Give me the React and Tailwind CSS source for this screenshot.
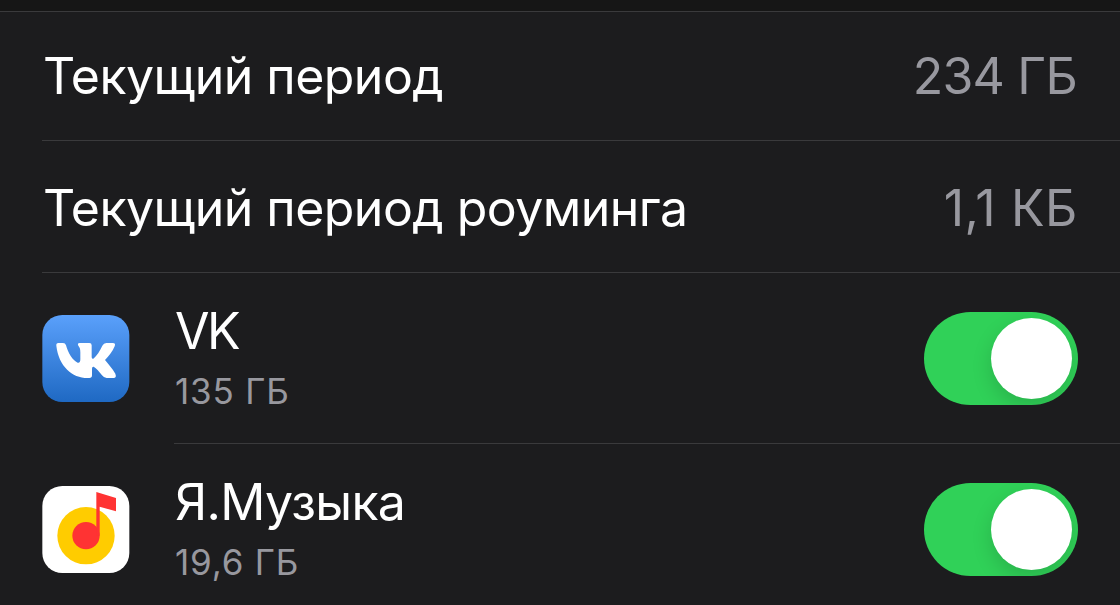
import React from 'react';

const VkIcon = () => (
  <svg className="h-[87px] w-[88px] shrink-0" viewBox="0 0 264 261">
    <defs>
      <linearGradient id="vk-bg" x1="0" y1="0" x2="0" y2="1">
        <stop offset="0" stopColor="#5aa0fb" />
        <stop offset="1" stopColor="#1f69c3" />
      </linearGradient>
    </defs>
    <rect x="1" width="261" height="261" rx="60" fill="url(#vk-bg)" />
    <path
      fill="#fff"
      transform="translate(1)"
      d="M48 84H62Q69 84 71 91C77 113 91 137 106 143Q114 145 114 133V112C114 101 112 97 108 92Q104 84 112 84H141Q148 84 148 91V126Q148 133 153 131C163 123 173 107 180 92Q184 84 192 84H211Q221 84 217 94C210 111 199 123 188 135C197 147 211 161 219 176Q224 189 213 189H193Q185 189 179 181C171 170 162 159 154 155Q149 154 149 161V181Q149 189 141 189H136C89 189 49 153 42 92Q41 84 48 84Z"
    />
  </svg>
);

const MusicIcon = () => (
  <svg className="h-[87px] w-[88px] shrink-0" viewBox="0 0 264 261">
    <rect x="1" width="261" height="261" rx="60" fill="#fff" />
    <circle cx="132" cy="149" r="86" fill="#fc0" />
    <circle cx="132" cy="149" r="41" fill="#f33" />
    <path fill="#f33" d="M163 18L222 36V76L173 62V149H163Z" />
  </svg>
);

const Toggle = () => (
  <button
    type="button"
    role="switch"
    aria-checked="true"
    className="flex h-[93px] w-[153.5px] items-center justify-end overflow-hidden rounded-full bg-[#30d158] pr-[6px]"
  >
    <span className="size-[81px] rounded-full bg-white shadow-[0_8px_20px_rgba(0,0,0,0.15)]" />
  </button>
);

const PeriodRow = ({ title, value, className, valueClassName }) => (
  <div
    className={`ml-[42px] flex items-center justify-between border-b border-[#3a3a3c] pl-[1px] text-[50px] leading-[60px] ${className}`}
  >
    <span className="tracking-[-0.55px] text-white">{title}</span>
    <span className={`text-[#98989f] ${valueClassName}`}>{value}</span>
  </div>
);

const AppRow = ({ icon, name, nameClassName, usage }) => (
  <div className="ml-[42px] flex h-[171px] items-center">
    {icon}
    <div className="ml-[44px] flex h-full flex-1 items-center justify-between border-b border-[#3a3a3c] pr-[42.5px] pl-[1px]">
      <div className="pb-[3px]">
        <p className={`text-[50px] leading-[60px] text-white ${nameClassName}`}>{name}</p>
        <p className="mt-[9px] text-[35px] leading-[42px] tracking-[0.8px] text-[#98989f]">{usage}</p>
      </div>
      <Toggle />
    </div>
  </div>
);

export default function App() {
  return (
    <div className="h-[605px] w-[1120px] overflow-hidden bg-[#1c1c1e] font-['Inter',sans-serif]">
      <div className="h-3 border-b border-[#3a3a3c] bg-[#161616]" />
      <div className="grid grid-rows-[129px_132px]">
        <PeriodRow
          title="Текущий период"
          value="234 ГБ"
          className="pr-[43px]"
          valueClassName="tracking-[-0.8px]"
        />
        <PeriodRow
          title="Текущий период роуминга"
          value="1,1 КБ"
          className="pt-[2px] pr-[42px]"
          valueClassName="tracking-[0.6px]"
        />
      </div>
      <AppRow icon={<VkIcon />} name="VK" nameClassName="tracking-[-2.5px]" usage="135 ГБ" />
      <AppRow icon={<MusicIcon />} name="Я.Музыка" nameClassName="tracking-[-0.7px]" usage="19,6 ГБ" />
    </div>
  );
}
